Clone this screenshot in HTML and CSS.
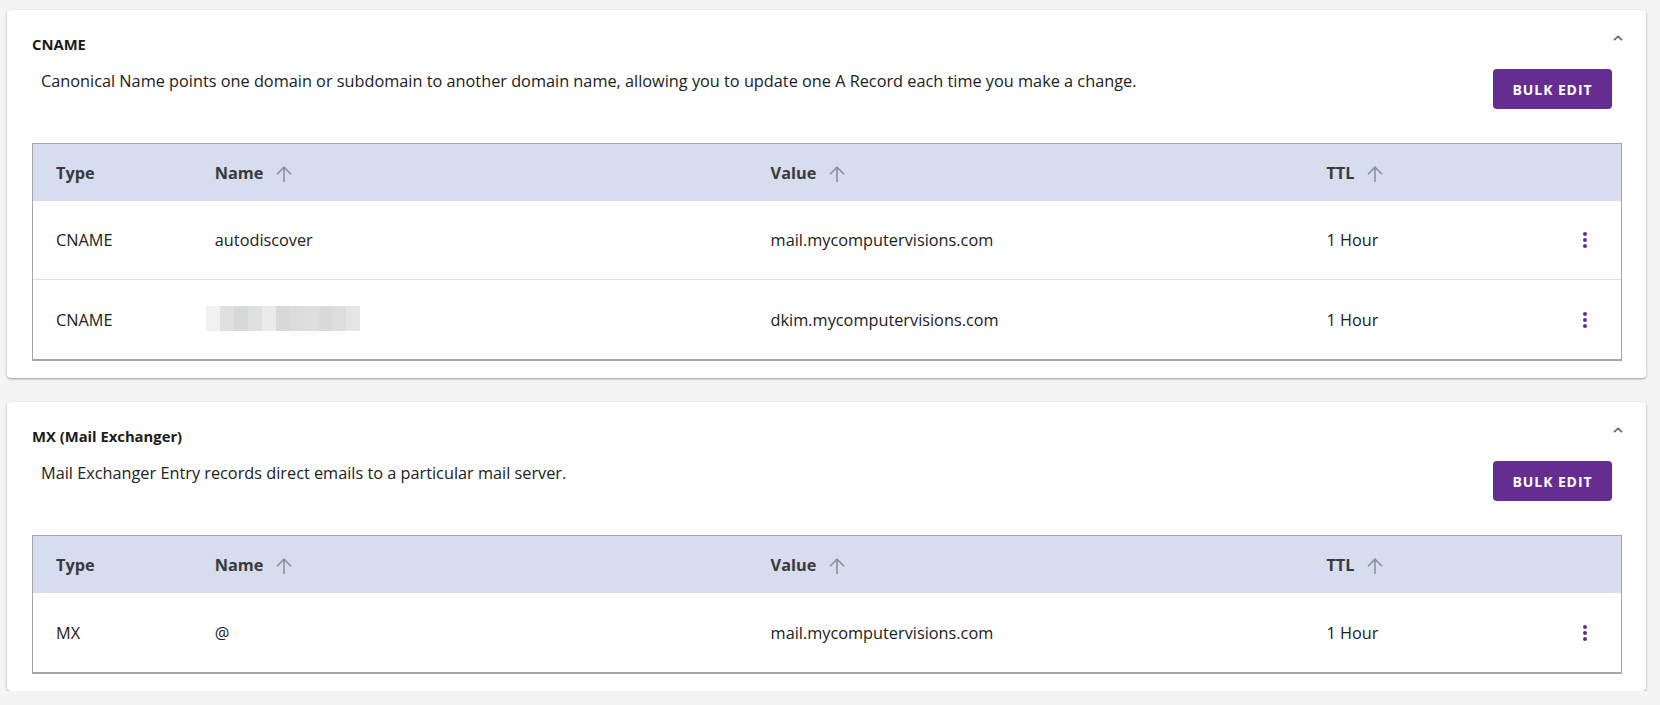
FILE: index.html
```html
<!DOCTYPE html>
<html lang="en">
<head>
<meta charset="utf-8">
<title>DNS Records</title>
<link rel="stylesheet" href="styles.css">
</head>
<body>
<main class="page">
  <section class="card">
    <div class="card-head">
      <h2 class="card-title">CNAME</h2>
      <svg class="chevron" width="10" height="6" viewBox="0 0 10 6"><polyline points="1,5.2 5,1.4 9,5.2" fill="none" stroke="#6b6b6b" stroke-width="1.8"/></svg>
    </div>
    <div class="card-desc-row">
      <p class="card-desc">Canonical Name points one domain or subdomain to another domain name, allowing you to update one A Record each time you make a change.</p>
      <button class="btn">BULK EDIT</button>
    </div>
    <div class="table">
      <div class="tr th">
        <div class="td">Type</div>
        <div class="td">Name<svg class="sort" width="16" height="16" viewBox="0 0 16 16"><path d="M8 16V1.2M1 8.2L8 1.2 15 8.2" fill="none" stroke="#8e9096" stroke-width="1.6"/></svg></div>
        <div class="td">Value<svg class="sort" width="16" height="16" viewBox="0 0 16 16"><path d="M8 16V1.2M1 8.2L8 1.2 15 8.2" fill="none" stroke="#8e9096" stroke-width="1.6"/></svg></div>
        <div class="td">TTL<svg class="sort" width="16" height="16" viewBox="0 0 16 16"><path d="M8 16V1.2M1 8.2L8 1.2 15 8.2" fill="none" stroke="#8e9096" stroke-width="1.6"/></svg></div>
        <div class="td"></div>
      </div>
      <div class="tr">
        <div class="td">CNAME</div>
        <div class="td">autodiscover</div>
        <div class="td">mail.mycomputervisions.com</div>
        <div class="td">1 Hour</div>
        <div class="td action"><svg width="24" height="24" viewBox="0 0 24 24"><circle cx="12" cy="6" r="2" fill="#662d91"/><circle cx="12" cy="12" r="2" fill="#662d91"/><circle cx="12" cy="18" r="2" fill="#662d91"/></svg></div>
      </div>
      <div class="tr">
        <div class="td">CNAME</div>
        <div class="td"><span class="blur" aria-label="hidden name"></span></div>
        <div class="td">dkim.mycomputervisions.com</div>
        <div class="td">1 Hour</div>
        <div class="td action"><svg width="24" height="24" viewBox="0 0 24 24"><circle cx="12" cy="6" r="2" fill="#662d91"/><circle cx="12" cy="12" r="2" fill="#662d91"/><circle cx="12" cy="18" r="2" fill="#662d91"/></svg></div>
      </div>
    </div>
  </section>

  <section class="card">
    <div class="card-head">
      <h2 class="card-title">MX (Mail Exchanger)</h2>
      <svg class="chevron" width="10" height="6" viewBox="0 0 10 6"><polyline points="1,5.2 5,1.4 9,5.2" fill="none" stroke="#6b6b6b" stroke-width="1.8"/></svg>
    </div>
    <div class="card-desc-row">
      <p class="card-desc">Mail Exchanger Entry records direct emails to a particular mail server.</p>
      <button class="btn">BULK EDIT</button>
    </div>
    <div class="table">
      <div class="tr th">
        <div class="td">Type</div>
        <div class="td">Name<svg class="sort" width="16" height="16" viewBox="0 0 16 16"><path d="M8 16V1.2M1 8.2L8 1.2 15 8.2" fill="none" stroke="#8e9096" stroke-width="1.6"/></svg></div>
        <div class="td">Value<svg class="sort" width="16" height="16" viewBox="0 0 16 16"><path d="M8 16V1.2M1 8.2L8 1.2 15 8.2" fill="none" stroke="#8e9096" stroke-width="1.6"/></svg></div>
        <div class="td">TTL<svg class="sort" width="16" height="16" viewBox="0 0 16 16"><path d="M8 16V1.2M1 8.2L8 1.2 15 8.2" fill="none" stroke="#8e9096" stroke-width="1.6"/></svg></div>
        <div class="td"></div>
      </div>
      <div class="tr">
        <div class="td">MX</div>
        <div class="td">@</div>
        <div class="td">mail.mycomputervisions.com</div>
        <div class="td">1 Hour</div>
        <div class="td action"><svg width="24" height="24" viewBox="0 0 24 24"><circle cx="12" cy="6" r="2" fill="#662d91"/><circle cx="12" cy="12" r="2" fill="#662d91"/><circle cx="12" cy="18" r="2" fill="#662d91"/></svg></div>
      </div>
    </div>
  </section>
</main>
</body>
</html>
```

FILE: styles.css
```css
* { box-sizing: border-box; }

html, body {
  margin: 0;
  padding: 0;
  background: #f4f4f4;
}

body {
  font-family: "Open Sans", "Noto Sans", sans-serif;
  color: #212121;
}

.page {
  padding: 10px 14px 0 7px;
  display: flex;
  flex-direction: column;
  gap: 24px;
}

.card {
  background: #ffffff;
  border-radius: 4px;
  box-shadow: 0 1px 3px rgba(0, 0, 0, 0.28), 0 1px 1px rgba(0, 0, 0, 0.12);
  padding: 24px 24px 17px 25px;
}

.card-head {
  display: flex;
  justify-content: space-between;
  align-items: flex-start;
}

.card-title {
  margin: 0;
  font-size: 14.8px;
  line-height: 20px;
  font-weight: 700;
  color: #1b1b1b;
}

.chevron {
  margin-top: 1px;
  margin-right: -1px;
}

.card-desc-row {
  display: flex;
  justify-content: space-between;
  align-items: flex-start;
  margin-top: 15px;
  padding-right: 10px;
}

.card-desc {
  margin: 0 0 0 9px;
  font-size: 16.3px;
  line-height: 25px;
  color: #212121;
}

.btn {
  width: 119px;
  height: 40px;
  border: none;
  border-radius: 4px;
  background: #662d91;
  color: #ffffff;
  font-family: "Open Sans", "Noto Sans", sans-serif;
  font-size: 14px;
  font-weight: 700;
  letter-spacing: 0.9px;
  padding: 0;
}

.table {
  margin-top: 34px;
  border: 1px solid #a6a6a6;
  border-bottom-width: 2px;
}

.tr {
  display: grid;
  grid-template-columns: 10% 35% 35% 1fr 60px;
  align-items: center;
  height: 79px;
  border-bottom: 1px solid #e0e0e0;
  font-size: 16.3px;
}

.tr:last-child {
  border-bottom: none;
}

.tr.th {
  height: 57px;
  background: #d5ddef;
  border-bottom: none;
  font-weight: 700;
  color: #3a3a3a;
}

.td {
  padding-left: 23px;
  display: flex;
  align-items: center;
  white-space: nowrap;
}

.sort {
  margin-left: 13px;
  margin-top: 3px;
}

.td.action {
  padding-left: 12px;
}

.blur {
  display: block;
  width: 154px;
  height: 25px;
  margin-left: -9px;
  margin-top: -3px;
  background: linear-gradient(to right,
    #f1f1f0 0 14px, #e0e0e0 14px 28px, #d7d9d8 28px 42px, #dfe0e2 42px 56px,
    #ebebeb 56px 70px, #d8d8d8 70px 84px, #dcdcdc 84px 98px, #dedede 98px 112px,
    #dadada 112px 126px, #dcdddc 126px 140px, #e6e6e6 140px 154px);
}
```
